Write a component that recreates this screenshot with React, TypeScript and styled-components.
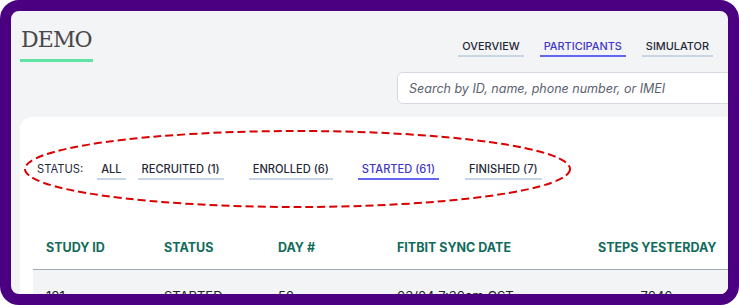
import React from "react";
import styled, { createGlobalStyle } from "styled-components";

const GlobalStyle = createGlobalStyle`
  html, body { margin: 0; padding: 0; background: #ffffff; }
  body { font-family: Inter, "Noto Sans", sans-serif; -webkit-font-smoothing: antialiased; }
  * { box-sizing: border-box; }
`;

const Frame = styled.div`
  position: relative;
  width: 739px;
  height: 305px;
  border: 11px solid #4b0082;
  border-radius: 19px;
  background: #f3f4f6;
  overflow: hidden;
`;

const Page = styled.div`
  width: 790px;
  padding-left: 9px;
`;

const Header = styled.header`
  display: grid;
  grid-template-columns: 377px 345px;
  height: 106px;
`;

const Brand = styled.div`
  padding-top: 15px;
`;

const Title = styled.h1`
  display: inline-block;
  margin: 0;
  padding: 0 1px 5px 1px;
  font-family: "DejaVu Serif", "Liberation Serif", serif;
  font-weight: 400;
  font-size: 22px;
  line-height: 28px;
  letter-spacing: -0.9px;
  color: #484848;
  border-bottom: 3px solid #62e3a6;
`;

const RightCol = styled.div`
  display: flex;
  flex-direction: column;
  padding-top: 28px;
`;

const Nav = styled.nav`
  display: flex;
  justify-content: flex-end;
  gap: 16px;
  padding-right: 29px;
`;

const NavLink = styled.a<{ $active?: boolean }>`
  padding: 0 4px 2px;
  font-size: 10.9px;
  line-height: 14px;
  font-weight: 500;
  color: ${(p) => (p.$active ? "#3f37c9" : "#1f2937")};
  border-bottom: 2px solid ${(p) => (p.$active ? "#6366f1" : "#cbd5e1")};
  text-decoration: none;
`;

const Search = styled.input`
  margin-top: 15px;
  width: 100%;
  height: 32px;
  padding: 0 11px;
  border: 1px solid #d5d9e0;
  border-radius: 6px;
  background: #ffffff;
  font-family: Inter, "Noto Sans", sans-serif;
  font-size: 12.5px;
  outline: none;
  &::placeholder {
    color: #5b6270;
    font-style: italic;
  }
`;

const Card = styled.section`
  background: #ffffff;
  border-radius: 12px;
  padding-top: 45px;
`;

const StatusRow = styled.div`
  display: flex;
  align-items: flex-start;
  padding-left: 17px;
`;

const StatusLabel = styled.span`
  font-size: 11.2px;
  line-height: 14px;
  color: #1f2937;
  margin-right: 14px;
`;

const StatusLink = styled.a<{ $active?: boolean; $space: number }>`
  padding: 0 4px 2px;
  margin-right: ${(p) => p.$space}px;
  font-size: 11.1px;
  line-height: 14px;
  font-weight: 500;
  color: ${(p) => (p.$active ? "#3f37c9" : "#1f2937")};
  border-bottom: 2px solid ${(p) => (p.$active ? "#6366f1" : "#c9d4e6")};
  text-decoration: none;
`;

const Table = styled.div`
  margin: 60px 0 0 13px;
`;

const Row = styled.div<{ $head?: boolean }>`
  display: grid;
  grid-template-columns: 118px 114px 119px 201px 143px 200px;
  padding: ${(p) => (p.$head ? "0 0 13px" : "18px 0")};
  background: ${(p) => (p.$head ? "#ffffff" : "#f3f4f6")};
  border-bottom: ${(p) => (p.$head ? "1px solid #a3aab6" : "none")};
`;

const Cell = styled.div<{ $head?: boolean; $center?: boolean }>`
  padding: 0 13px;
  font-size: ${(p) => (p.$head ? "12.5px" : "13px")};
  line-height: 16px;
  font-weight: ${(p) => (p.$head ? 700 : 400)};
  color: ${(p) => (p.$head ? "#116b5b" : "#222222")};
  text-align: ${(p) => (p.$center ? "center" : "left")};
  white-space: nowrap;
`;

const Annotation = styled.svg`
  position: absolute;
  left: -11px;
  top: -11px;
  width: 739px;
  height: 305px;
  pointer-events: none;
`;

const statuses = [
  { label: "ALL", space: 12 },
  { label: "RECRUITED (1)", space: 25 },
  { label: "ENROLLED (6)", space: 25 },
  { label: "STARTED (61)", space: 26, active: true },
  { label: "FINISHED (7)", space: 0 },
];

const headers = ["STUDY ID", "STATUS", "DAY #", "FITBIT SYNC DATE", "STEPS YESTERDAY"];
const row = ["101", "STARTED", "52", "03/04 7:30am CST", "7046"];

export default function App() {
  return (
    <>
      <GlobalStyle />
      <Frame>
        <Page>
          <Header>
            <Brand>
              <Title>DEMO</Title>
            </Brand>
            <RightCol>
              <Nav>
                <NavLink href="#">OVERVIEW</NavLink>
                <NavLink href="#" $active>
                  PARTICIPANTS
                </NavLink>
                <NavLink href="#">SIMULATOR</NavLink>
              </Nav>
              <Search placeholder="Search by ID, name, phone number, or IMEI" />
            </RightCol>
          </Header>
          <Card>
            <StatusRow>
              <StatusLabel>STATUS:</StatusLabel>
              {statuses.map((s) => (
                <StatusLink key={s.label} href="#" $active={s.active} $space={s.space}>
                  {s.label}
                </StatusLink>
              ))}
            </StatusRow>
            <Table>
              <Row $head>
                {headers.map((h, i) => (
                  <Cell key={h} $head $center={i === 4}>
                    {h}
                  </Cell>
                ))}
              </Row>
              <Row>
                {row.map((c, i) => (
                  <Cell key={i} $center={i === 4}>
                    {c}
                  </Cell>
                ))}
              </Row>
            </Table>
          </Card>
        </Page>
        <Annotation viewBox="0 0 739 305">
          <ellipse
            cx="297.5"
            cy="169"
            rx="272.5"
            ry="38"
            fill="none"
            stroke="#d90000"
            strokeWidth="2"
            strokeDasharray="8 4"
          />
        </Annotation>
      </Frame>
    </>
  );
}
